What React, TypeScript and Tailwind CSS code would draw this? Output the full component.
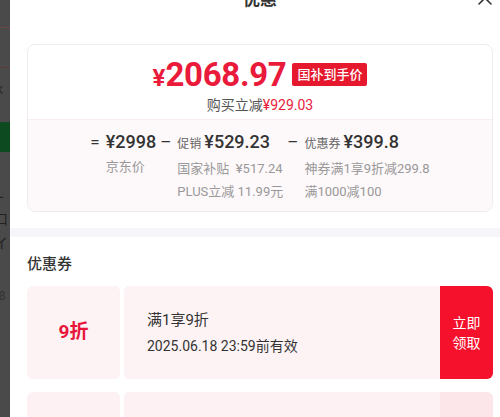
import React from 'react';

const priceParts = [
  { op: '=', label: '', amount: '¥2998', notes: ['京东价'] },
  { op: '–', label: '促销', amount: '¥529.23', notes: ['国家补贴\u00a0\u00a0¥517.24', 'PLUS立减 11.99元'] },
  { op: '–', label: '优惠券', amount: '¥399.8', notes: ['神券满1享9折减299.8', '满1000减100'] },
];

function BackdropStrip() {
  // 弹窗背后的页面，只露出一条
  return (
    <div className="w-[10px] shrink-0 bg-[#4a4a4a] overflow-hidden text-[#222] text-[14px] leading-none">
      <div className="h-[28px] border-b border-[#6b4646]" />
      <div className="h-[40px] border-b border-[#5a3c3c]" />
      <div className="h-[54px] pt-[14px] -ml-[4px] text-[#2a2a2a]">k</div>
      <div className="h-[30px] bg-[#0d4a1f]" />
      <div className="h-[50px] pt-[34px] -ml-[4px]">L</div>
      <div className="pt-[10px] -ml-[6px]">口</div>
      <div className="pt-[10px] -ml-[6px]">イ</div>
      <div className="pt-[40px] -ml-[8px] text-[#333] text-[12px]">98</div>
    </div>
  );
}

function Coupon({ faded }: { faded?: boolean }) {
  const bg = faded ? 'bg-[#fdf1f4]' : 'bg-[#fdf3f5]';
  return (
    <div className="relative flex h-[93px] shrink-0">
      <div className={`w-[93px] shrink-0 rounded-l-[6px] flex items-center justify-center ${bg}`}>
        {!faded && <span className="text-[19px] font-bold text-[#e8163a]">9折</span>}
      </div>
      <div className="w-[4px] shrink-0" />
      <div className={`flex-1 flex flex-col justify-center pl-[23px] gap-[6px] text-[#333] ${bg}`}>
        {!faded && (
          <>
            <span className="text-[15px] leading-[20px]">满1享9折</span>
            <span className="text-[14px] leading-[20px]">2025.06.18 23:59前有效</span>
          </>
        )}
      </div>
      <div className={`w-[53px] shrink-0 rounded-r-[6px] flex items-center justify-center text-white text-[14px] leading-[20px] text-center ${faded ? 'bg-[#fde6ea]' : 'bg-[#f5102c]'}`}>
        {!faded && (
          <span>
            立即
            <br />
            领取
          </span>
        )}
      </div>
      <span className="absolute left-[91px] -top-[4px] w-[8px] h-[8px] rounded-full bg-white" />
      <span className="absolute left-[91px] -bottom-[4px] w-[8px] h-[8px] rounded-full bg-white" />
    </div>
  );
}

export default function App() {
  return (
    <div className="w-[500px] h-[417px] overflow-hidden flex items-start bg-white font-['Roboto','Noto_Sans_CJK_SC',sans-serif]">
      <div className="self-stretch flex">
        <BackdropStrip />
      </div>
      <div className="w-[500px] shrink-0 bg-white">
        <div className="relative h-[40px] -mt-[20px] flex items-center justify-center">
          <span className="text-[17px] font-bold text-[#333]">优惠</span>
          <svg className="absolute left-[467px] top-[10px]" width="16" height="16" viewBox="0 0 16 16" fill="none" stroke="#333" strokeWidth="1.6" strokeLinecap="round">
            <path d="M2 2 L14 14 M14 2 L2 14" />
          </svg>
        </div>

        <div className="mx-[17px] mt-[24px] rounded-[8px] border border-[#f0eced] overflow-hidden">
          <div className="h-[74px] flex flex-col items-center pt-[13px]">
            <div className="flex items-center gap-[6px]">
              <span className="text-[#ea1a3b] font-bold leading-none">
                <span className="text-[24px]">¥</span>
                <span className="text-[33px] tracking-[-0.3px]">2068.97</span>
              </span>
              <span className="bg-[#e5182e] text-white text-[13px] font-medium leading-[23px] px-[5px] rounded-[2px]">国补到手价</span>
            </div>
            <div className="mt-[5px] text-[14px] leading-[18px] text-[#555]">
              购买立减<span className="text-[#ea1a3b]">¥929.03</span>
            </div>
          </div>
          <div className="h-[92px] bg-[#fdf8f9] flex justify-center pt-[9px] gap-[4px] border-t border-[#f8eef0]">
            {priceParts.map((p) => (
              <div key={p.amount} className="flex items-start gap-[6px]">
                <span className="text-[17px] leading-[26px] text-[#333]">{p.op}</span>
                <div className="flex flex-col items-start">
                  <div className="flex items-baseline gap-[3px] leading-[26px]">
                    {p.label && <span className="text-[12px] text-[#666]">{p.label}</span>}
                    <span className="text-[18px] font-medium text-[#333]">{p.amount}</span>
                  </div>
                  {p.notes.map((n) => (
                    <span key={n} className="text-[13px] leading-[23px] text-[#999] whitespace-nowrap">{n}</span>
                  ))}
                </div>
              </div>
            ))}
          </div>
        </div>

        <div className="h-[9px] mt-[16px] bg-[#f6f6fa]" />

        <div className="px-[17px]">
          <div className="mt-[17px] text-[15px] leading-[20px] font-medium text-[#333]">优惠券</div>
          <div className="mt-[12px] flex flex-col gap-[13px]">
            <Coupon />
            <Coupon faded />
          </div>
        </div>
      </div>
    </div>
  );
}
